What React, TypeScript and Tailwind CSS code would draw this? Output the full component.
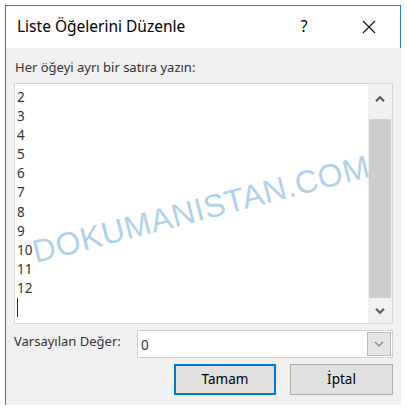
import React from 'react';

const items = ['2', '3', '4', '5', '6', '7', '8', '9', '10', '11', '12'];

const Chevron: React.FC<{ dir: 'up' | 'down'; thin?: boolean }> = ({ dir, thin }) => (
  <svg width="10" height="6" viewBox="0 0 10 6" className="block">
    <path
      d={dir === 'up' ? 'M1 5.2 L5 1.2 L9 5.2' : 'M1 0.8 L5 4.8 L9 0.8'}
      fill="none"
      stroke={thin ? '#7a7a7a' : '#5f5f5f'}
      strokeWidth={thin ? 1.2 : 2.2}
    />
  </svg>
);

export default function App() {
  return (
    <div className="w-[407px] h-[411px] bg-white overflow-hidden relative font-['Noto_Sans',sans-serif]">
      <div className="ml-[5px] mt-[5px] w-[396px] h-[400px] flex flex-col border-l border-t border-[#1883d7]">
        {/* title bar */}
        <div className="h-[42px] bg-white border-r border-[#1883d7] flex items-center pl-[11px] pr-[24px] text-[15.5px] text-black">
          <span className="flex-1">Liste Öğelerini Düzenle</span>
          <span className="w-[10px] text-center mr-[53px]">?</span>
          <svg width="14" height="14" viewBox="0 0 14 14">
            <path d="M1 1 L13 13 M13 1 L1 13" stroke="#111" strokeWidth="1.1" />
          </svg>
        </div>

        {/* body */}
        <div className="flex-1 bg-[#f0f0f0] px-2 pt-[10px] text-[13px] text-[#333]">
          <div className="leading-[19px] pl-[1px]">Her öğeyi ayrı bir satıra yazın:</div>

          <div className="mt-[6px] h-[241px] bg-white border border-[#d5d5d5] flex">
            <div className="flex-1 pl-[2px] pt-[4px] leading-[19.1px] text-[13.5px] text-[#333]">
              {items.map((n) => (
                <div key={n}>{n}</div>
              ))}
              <div className="h-[19px] flex items-center">
                <div className="w-px h-[19px] bg-[#222]" />
              </div>
            </div>
            <div className="w-[24px] bg-[#f0f0f0] flex flex-col items-center">
              <div className="h-[30px] flex items-center justify-center">
                <Chevron dir="up" />
              </div>
              <div className="mt-[5px] w-[22px] h-[179px] bg-[#cdcdcd]" />
              <div className="flex-1 flex items-center justify-center">
                <Chevron dir="down" />
              </div>
            </div>
          </div>

          <div className="mt-[6px] flex items-start">
            <div className="w-[123px] pt-[2px] leading-[19px]">Varsayılan Değer:</div>
            <div className="flex-1 h-[28px] bg-white border border-[#cfcfcf] flex items-center pl-[3px]">
              <span className="flex-1 pt-[2px] text-[13.5px]">0</span>
              <div className="w-[24px] h-[24px] mr-[1px] bg-[#e5e5e5] border border-[#b9b9b9] flex items-center justify-center">
                <Chevron dir="down" thin />
              </div>
            </div>
          </div>

          <div className="mt-[6px] flex justify-end gap-[14px] text-black">
            <button className="w-[102px] h-[31px] bg-[#e1e1e1] border-2 border-[#0078d7] text-[13.5px]">Tamam</button>
            <button className="w-[103px] h-[31px] bg-[#e1e1e1] border border-[#adadad] text-[13.5px]">İptal</button>
          </div>
        </div>
      </div>

      {/* watermark */}
      <div className="absolute left-[20px] top-[193px] w-[362px] text-center text-[32px] leading-none tracking-[0.5px] text-[#b0d1ec] font-['Liberation_Sans',sans-serif] -rotate-[14.5deg] pointer-events-none select-none">
        DOKUMANISTAN.COM
      </div>
    </div>
  );
}
